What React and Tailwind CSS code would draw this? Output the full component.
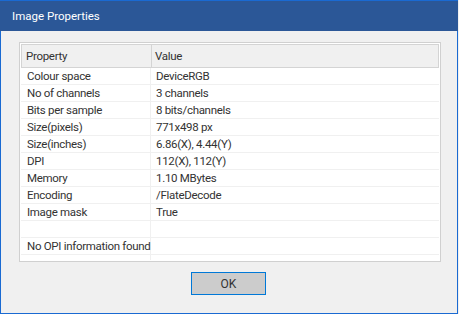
import React from "react";

const ROWS = [
  ["Colour space", "DeviceRGB"],
  ["No of channels", "3 channels"],
  ["Bits per sample", "8 bits/channels"],
  ["Size(pixels)", "771x498 px"],
  ["Size(inches)", "6.86(X), 4.44(Y)"],
  ["DPI", "112(X), 112(Y)"],
  ["Memory", "1.10 MBytes"],
  ["Encoding", "/FlateDecode"],
  ["Image mask", "True"],
  ["", ""],
  ["No OPI information found", ""],
];

export default function App() {
  return (
    <div
      className="w-[459px] h-[314px] bg-[#f0f0f0] text-[11.5px] text-[#333333]"
      style={{ fontFamily: 'Roboto, "Liberation Sans", Arial, sans-serif' }}
    >
      <div className="w-[458px] h-[314px] flex flex-col border border-t-0 border-[#1a6ad2]">
        {/* title bar */}
        <div className="h-[31px] shrink-0 bg-[#2b5797] border-t border-[#1a6ad2] flex items-center pl-[12px] pt-[2px] text-white text-[11.5px] -mx-px">
          Image Properties
        </div>

        {/* list */}
        <div className="mt-[11px] ml-[18px] w-[422px] h-[220px] border border-[#d0d0d0] bg-white p-px flex flex-col tracking-[-0.3px]">
          <div className="h-[24px] shrink-0 flex border border-[#d4d4d4] bg-[#f0f0f0]">
            <div className="w-[130px] border-r border-[#d4d4d4] flex items-center pl-[4px] pt-px">
              Property
            </div>
            <div className="flex-1 flex items-center pl-[3px] pt-px">Value</div>
          </div>
          {ROWS.map(([k, v], i) => (
            <div key={i} className="h-[17px] shrink-0 flex border-b border-[#f0f0f0]">
              <div className="w-[130px] border-r border-[#f0f0f0] flex items-center pl-[6px] pt-px whitespace-nowrap">
                {k}
              </div>
              <div className="flex-1 flex items-center pl-[5px] pt-px whitespace-nowrap">
                {v}
              </div>
            </div>
          ))}
          <div className="flex-1 flex">
            <div className="w-[130px] border-r border-[#f0f0f0]" />
          </div>
        </div>

        {/* footer */}
        <div className="flex justify-center mt-[10px]">
          <button className="w-[75px] h-[23px] bg-[#cccccc] border border-[#0078d7] text-[#333333] text-[12px] ml-[-1px]">
            OK
          </button>
        </div>
      </div>
    </div>
  );
}
